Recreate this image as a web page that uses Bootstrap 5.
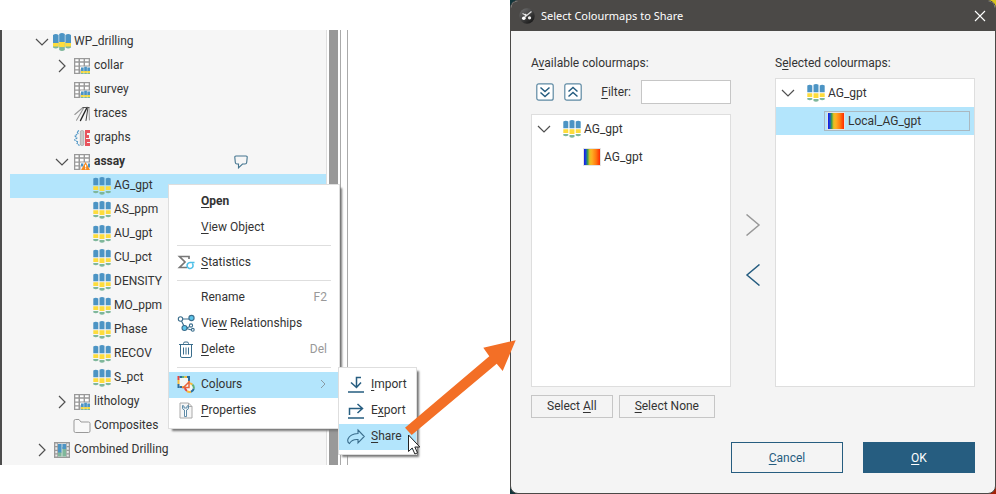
<!DOCTYPE html>
<html lang="en">
<head>
<meta charset="utf-8">
<meta name="viewport" content="width=device-width, initial-scale=1">
<title>Select Colourmaps to Share</title>
<link href="https://cdn.jsdelivr.net/npm/bootstrap@5.3.0/dist/css/bootstrap.min.css" rel="stylesheet">
<style>
  :root { --ink: #333; --navy: #265d80; --pick: #b3e5fc; --line: #dedede; }
  body { font: 12px/16px Roboto, "Liberation Sans", sans-serif; color: var(--ink); background: #fff; }
  svg { display: block; flex: none; }
  u { text-underline-offset: 2px; text-decoration-thickness: 1px; }
  button { font: inherit; color: inherit; }

  /* project tree */
  .project-pane { flex: 0 0 348px; margin-top: 30px; height: 435px; background: #f6f6f6; border-left: 2px solid #4d4d4d; border-right: 1px solid #aaa; }
  .project-tree { border-right: 1px solid var(--line); padding-left: 8px; }
  .scroll-track { width: 14px; background: #fff; border-right: 1px solid #aaa; padding: 0 2px; }
  .scroll-thumb { height: 100%; background: #999; }
  .tree-line { height: 24px; }
  .tree-line.picked, .map-line.picked { background: var(--pick); }
  .lv0 { padding-left: 22px; } .lv1 { padding-left: 42px; } .lv2 { padding-left: 62px; }
  .cell { width: 20px; height: 18px; flex: none; display: flex; justify-content: center; align-items: center; }
  .tree-text { padding-left: 2px; white-space: nowrap; }
  .tree-line .tree-text { padding-bottom: 2px; }
  .note { margin-left: 109px; }
  .edge { width: 6px; background: #fff; }

  /* context menus */
  .ctx { position: absolute; background: #fff; border: 1px solid var(--line); padding: 4px 0; box-shadow: 3px 3px 2px -1px #777; z-index: 2; }
  .ctx-main { left: 166px; top: 154px; width: 172px; }
  .ctx-sub { left: 100%; top: -5px; width: 79px; margin-left: -1px; z-index: 3; }
  .ctx-item { display: flex; align-items: center; width: 100%; height: 26px; border: 0; background: transparent; padding: 0 12px 2px 7px; text-align: left; }
  .ctx-item.hot { background: var(--pick); }
  .ctx-item .cell { margin-right: 5px; }
  .ctx-rule { height: 1px; margin: 4px 8px; background: var(--line); border: 0; opacity: 1; }
  .ctx-key { color: #999; }
  .pointer-layer { position: absolute; left: 400px; top: 336px; z-index: 5; pointer-events: none; }

  /* dialog */
  .desktop-back { margin-left: 162px; min-height: 100vh;
    background: linear-gradient(to right, transparent 50%, #d8c51c 50%) top / 100% 20px no-repeat,
                linear-gradient(to right, #12353b 50%, #a32308 50%); }
  .share-dialog { background: #f4f4f4; border: 1px solid #4b4947; border-radius: 8px; overflow: hidden; }
  .title-strip { height: 30px; gap: 6px; background: #4b4947; color: #fff; font-family: "Noto Sans", "Open Sans", sans-serif; font-size: 11px; padding: 0 8px; }
  .dialog-body { padding: 24px 20px 20px; }
  .map-label { height: 16px; margin-bottom: 7px; }
  .tool-row { height: 28px; margin-bottom: 8px; padding-left: 5px; gap: 10px; }
  .bare { border: 0; background: transparent; padding: 0; }
  .filter-box { width: 90px; height: 24px; border: 1px solid #c6c6c6; background: #fff; font: inherit; padding: 2px 4px; }
  .map-list { background: #fff; border: 1px solid var(--line); }
  .map-line { height: 28px; padding-left: 2px; }
  .map-line .cell:first-child { margin-right: 8px; }
  .map-kid { padding-left: 50px; }
  .map-kid.picked { padding: 4px 4px 4px 48px; }
  .focus-box { height: 20px; flex: 1; border: 1px solid #aab8c0; padding-left: 1px; }
  .move-col { width: 44px; flex: none; gap: 28px; padding-top: 159px; }
  .pick-row { height: 23px; margin-top: 8px; gap: 6px; }
  .pick-btn { border: 1px solid #c6c6c6; background: #f4f4f4; padding: 0 15px; height: 23px; line-height: 21px; }
  .end-row { gap: 20px; margin-top: 24px; }
  .end-btn { width: 112px; height: 31px; border: 1px solid var(--navy); background: #f4f4f4; color: var(--navy); }
  .end-btn.go { background: var(--navy); color: #fff; }
</style>
<script src="https://cdn.jsdelivr.net/npm/bootstrap@5.3.0/dist/js/bootstrap.bundle.min.js"></script>
</head>
<body>
<svg width="0" height="0" class="position-absolute" aria-hidden="true">
  <defs>
    <linearGradient id="ramp"><stop offset="0" stop-color="#1414e6"/><stop offset=".12" stop-color="#1b4fd0"/><stop offset=".22" stop-color="#3a9a50"/><stop offset=".36" stop-color="#e8c020"/><stop offset=".5" stop-color="#ffad22"/><stop offset=".75" stop-color="#ff7a10"/><stop offset="1" stop-color="#ff2a00"/></linearGradient>
    <linearGradient id="orb" x1="0" y1="0" x2=".8" y2="1"><stop offset="0" stop-color="#777"/><stop offset=".5" stop-color="#444"/><stop offset="1" stop-color="#161616"/></linearGradient>
  </defs>
  <symbol id="down" viewBox="0 0 14 14"><path d="M1 4l6 6 6-6" fill="none" stroke="#505050" stroke-width="1.200"/></symbol>
  <symbol id="next" viewBox="0 0 14 14"><path d="M4 1l6 6-6 6" fill="none" stroke="#505050" stroke-width="1.200"/></symbol>
  <symbol id="holes" viewBox="0 0 18 18">
    <path fill="#7fb79b" d="M0 10h5.600v4.500q-2.800 2-5.600 0zM6.200 10h5.600v7q-2.800 2-5.600 0zM12.400 10H18v4.500q-2.800 2-5.600 0z"/>
    <path fill="#fddc3c" d="M0 9h5.600v4.500H0zM6.200 9h5.600v5H6.200zM12.400 9H18v4.500h-5.600z"/>
    <path fill="#4c94c4" d="M0 2q2.800-1.800 5.600 0v8H0zM6.200 1q2.800-1.800 5.600 0v8H6.200zM12.400 2q2.800-1.800 5.600 0v8h-5.600z"/>
  </symbol>
  <symbol id="parts" viewBox="0 0 18 18">
    <path fill="#4c94c4" d="M.3 1.500q2.500-1.400 5 0v6.800h-5zM6.500.8q2.500-1.400 5 0v7.400h-5zM12.700 1.500q2.500-1.400 5 0v6.800h-5z"/>
    <path fill="#fddc3c" d="M.3 9.300h5v3.700h-5zM6.500 9.300h5V14h-5zM12.700 9.300h5v3.700h-5z"/>
    <path fill="#7fb79b" d="M.3 14h5v1.600q-2.500 1.400-5 0zM6.500 15h5v2q-2.500 1.600-5 0zM12.700 14h5v1.600q-2.500 1.400-5 0z"/>
  </symbol>
  <symbol id="grid" viewBox="0 0 16 16"><path d="M0 0h16v16H0z" fill="#999"/><path d="M1.300 1.300h3.200v2H1.300zM6 1.300h3.600v2H6zM11 1.300h3.700v2H11zM1.300 4.800h3.200v2.600H1.300zM6 4.800h3.600v2.600H6zM11 4.800h3.700v2.600H11zM1.300 8.800h3.200v2.400H1.300zM6 8.800h3.600v2.400H6zM1.300 12.600h3.200v2.200H1.300z" fill="#fff"/></symbol>
  <symbol id="table" viewBox="0 0 16 16"><use href="#grid" width="16" height="16"/><path d="M6.500 8.500H16V16H6.500z" fill="#f6f6f6"/><path fill="#4c94c4" d="M7 9.500h2.700v4H7zM10.200 8.800h2.700v4.700h-2.700zM13.300 9.500H16v4h-2.700z"/><path fill="#f5d83c" d="M7 13h2.700v2H7zM10.200 13h2.700v2h-2.700zM13.300 13H16v2h-2.700z"/><path fill="#7fb79b" d="M7 15h2.700v1H7zM10.200 15h2.700v1h-2.700zM13.300 15H16v1h-2.700z"/></symbol>
  <symbol id="warn" viewBox="0 0 16 16"><use href="#grid" width="16" height="16"/><path d="M6.500 8.500H16V16H6.500z" fill="#f6f6f6"/><path fill="#4c94c4" d="M7 9.500h2.300v3H7zM14 9.500h2v4h-2z"/><path fill="#f58a1f" d="M11.600 8l4.400 8H7z"/><path d="M11 10.800h1.200v2.600H11zM11 14.200h1.200v1H11z" fill="#fff"/></symbol>
  <symbol id="traces" viewBox="0 0 16 16"><g fill="none" stroke-linecap="round"><path d="M9 1.500L.8 8.500M10 1.500L2.500 14.200" stroke="#999" stroke-width="1.100"/><path d="M13 1.500L6.500 14.500" stroke="#222" stroke-width="1.400"/><path d="M14 1.500l-2 13" stroke="#444"/><path d="M15 1.500l.4 12.500" stroke="#999"/><path d="M9 1.500h6" stroke="#555"/></g></symbol>
  <symbol id="graphs" viewBox="0 0 16 16"><path d="M5 .5L3 2 4 3.500 1 6l2 2-2.500 2L4 12l-1 1.500 2.500 2" fill="none" stroke="#4c94c4" stroke-width="1.100" stroke-dasharray="2 .7"/><rect x="6.300" y=".5" width="3.600" height="15" rx="1.500" fill="#c8c8c8" stroke="#999" stroke-width=".6"/><path fill="#e8525c" d="M11 0h5v3h-3v2h2v3h-3v1h4v3h-3v1h3v3h-5z"/></symbol>
  <symbol id="folder" viewBox="0 0 18 16"><path d="M1 13V3q0-1.500 1.500-1.500H6L8 4h7.500Q17 4 17 5.500V13q0 1.500-1.500 1.500h-13Q1 14.500 1 13z" fill="#f8f8f8" stroke="#999"/></symbol>
  <symbol id="combo" viewBox="0 0 16 16"><path d="M0 0h16v16H0z" fill="#999"/><path d="M1.300 1.500h2v2.500h-2zM1.300 5.300h2v2.500h-2zM1.300 9h2v2.300h-2zM1.300 12.600h2v2h-2zM12.800 1.500h2v2.500h-2zM12.800 5.300h2v2.500h-2zM12.800 9h2v2.300h-2zM12.800 12.600h2v2h-2zM4 1.200h8.200v13.500H4z" fill="#e8e8e8"/><path fill="#7fb79b" d="M4 10h3.600v4.500H4zM8.400 5h3.700v9.500H8.400z"/><path fill="#4c94c4" d="M4 2h3.600v8.500H4zM8.400 2h3.700v5H8.400z"/></symbol>
  <symbol id="swatch" viewBox="0 0 18 18"><rect x=".5" y=".5" width="17" height="17" fill="#fff" stroke="#e3e3e3"/><rect x="1" y="1" width="16" height="16" fill="url(#ramp)"/></symbol>
</svg>

<div class="d-flex position-relative">
  <section class="project-pane d-flex position-relative" aria-label="Project tree">
    <ul class="project-tree list-unstyled mb-0 flex-grow-1">
      <li class="tree-line lv0 d-flex align-items-center"><span class="cell"><svg width="14" height="14"><use href="#down"/></svg></span><span class="cell"><svg width="18" height="18"><use href="#holes"/></svg></span><span class="tree-text">WP_drilling</span></li>
      <li class="tree-line lv1 d-flex align-items-center"><span class="cell"><svg width="14" height="14"><use href="#next"/></svg></span><span class="cell"><svg width="16" height="16"><use href="#table"/></svg></span><span class="tree-text">collar</span></li>
      <li class="tree-line lv1 d-flex align-items-center"><span class="cell"></span><span class="cell"><svg width="16" height="16"><use href="#table"/></svg></span><span class="tree-text">survey</span></li>
      <li class="tree-line lv1 d-flex align-items-center"><span class="cell"></span><span class="cell"><svg width="16" height="16"><use href="#traces"/></svg></span><span class="tree-text">traces</span></li>
      <li class="tree-line lv1 d-flex align-items-center"><span class="cell"></span><span class="cell"><svg width="16" height="16"><use href="#graphs"/></svg></span><span class="tree-text">graphs</span></li>
      <li class="tree-line lv1 d-flex align-items-center"><span class="cell"><svg width="14" height="14"><use href="#down"/></svg></span><span class="cell"><svg width="16" height="16"><use href="#warn"/></svg></span><b class="tree-text">assay</b>
        <svg class="note" width="14" height="14" viewBox="0 0 14 14"><path d="M2 1h10Q13.300 1 13.200 2.300L12.700 7.500Q12.500 9 11 9H8.500L4.500 12.800V9H3Q1.500 9 1.300 7.500L.8 2.300Q.7 1 2 1z" fill="none" stroke="#44758f" stroke-width="1.100"/></svg></li>
      <li class="tree-line lv2 picked d-flex align-items-center"><span class="cell"></span><span class="cell"><svg width="18" height="18"><use href="#parts"/></svg></span><span class="tree-text">AG_gpt</span></li>
      <li class="tree-line lv2 d-flex align-items-center"><span class="cell"></span><span class="cell"><svg width="18" height="18"><use href="#parts"/></svg></span><span class="tree-text">AS_ppm</span></li>
      <li class="tree-line lv2 d-flex align-items-center"><span class="cell"></span><span class="cell"><svg width="18" height="18"><use href="#parts"/></svg></span><span class="tree-text">AU_gpt</span></li>
      <li class="tree-line lv2 d-flex align-items-center"><span class="cell"></span><span class="cell"><svg width="18" height="18"><use href="#parts"/></svg></span><span class="tree-text">CU_pct</span></li>
      <li class="tree-line lv2 d-flex align-items-center"><span class="cell"></span><span class="cell"><svg width="18" height="18"><use href="#parts"/></svg></span><span class="tree-text">DENSITY</span></li>
      <li class="tree-line lv2 d-flex align-items-center"><span class="cell"></span><span class="cell"><svg width="18" height="18"><use href="#parts"/></svg></span><span class="tree-text">MO_ppm</span></li>
      <li class="tree-line lv2 d-flex align-items-center"><span class="cell"></span><span class="cell"><svg width="18" height="18"><use href="#parts"/></svg></span><span class="tree-text">Phase</span></li>
      <li class="tree-line lv2 d-flex align-items-center"><span class="cell"></span><span class="cell"><svg width="18" height="18"><use href="#parts"/></svg></span><span class="tree-text">RECOV</span></li>
      <li class="tree-line lv2 d-flex align-items-center"><span class="cell"></span><span class="cell"><svg width="18" height="18"><use href="#parts"/></svg></span><span class="tree-text">S_pct</span></li>
      <li class="tree-line lv1 d-flex align-items-center"><span class="cell"><svg width="14" height="14"><use href="#next"/></svg></span><span class="cell"><svg width="16" height="16"><use href="#table"/></svg></span><span class="tree-text">lithology</span></li>
      <li class="tree-line lv1 d-flex align-items-center"><span class="cell"></span><span class="cell"><svg width="18" height="16"><use href="#folder"/></svg></span><span class="tree-text">Composites</span></li>
      <li class="tree-line lv0 d-flex align-items-center"><span class="cell"><svg width="14" height="14"><use href="#next"/></svg></span><span class="cell"><svg width="16" height="16"><use href="#combo"/></svg></span><span class="tree-text">Combined Drilling</span></li>
    </ul>
    <div class="scroll-track"><div class="scroll-thumb"></div></div>
    <div class="edge"></div>

    <div class="ctx ctx-main" role="menu">
      <button class="ctx-item fw-bold" role="menuitem"><span class="cell"></span><span><u>O</u>pen</span></button>
      <button class="ctx-item" role="menuitem"><span class="cell"></span><span><u>V</u>iew Object</span></button>
      <hr class="ctx-rule">
      <button class="ctx-item" role="menuitem"><span class="cell"><svg width="18" height="18" viewBox="0 0 18 18"><path d="M12 6V3.500H2.500L8 9l-5.500 5.500H10" fill="none" stroke="#777" stroke-width="1.700"/><path d="M17.500 9.500H13a3 3 0 1 0 2.300 1" fill="none" stroke="#4fc0e8" stroke-width="1.600"/></svg></span><span><u>S</u>tatistics</span></button>
      <hr class="ctx-rule">
      <button class="ctx-item" role="menuitem"><span class="cell"></span><span>Rename</span><span class="ctx-key ms-auto">F2</span></button>
      <button class="ctx-item" role="menuitem"><span class="cell"><svg width="18" height="18" viewBox="0 0 18 18"><g stroke="#3a6d8c" stroke-width="1.100" fill="none"><path d="M5.500 5h6.500M4.500 7l2.500 5M9.500 14l3.500-1.500M9.500 14.500l5 1.500"/><circle cx="3.500" cy="5" r="2.200" fill="#fff"/><circle cx="14.500" cy="4" r="2.600" fill="#5cc4ea"/><circle cx="7.500" cy="14" r="2.500" fill="#5cc4ea"/><circle cx="14" cy="11.500" r="1.600" fill="#fff"/><circle cx="15.800" cy="15.800" r="1.400" fill="#fff"/></g></svg></span><span>Vie<u>w</u> Relationships</span></button>
      <button class="ctx-item" role="menuitem"><span class="cell"><svg width="18" height="18" viewBox="0 0 18 18"><g stroke="#3a6d8c" stroke-width="1" fill="none"><path d="M2 4.500h14M6.500 4.500v-1Q6.500 2 8 2h2q1.500 0 1.500 1.500v1M3.500 4.500V16q0 1.500 1.500 1.500h8q1.500 0 1.500-1.500V4.500M6.500 7.500v7M9 7.500v7M11.500 7.500v7"/></g></svg></span><span><u>D</u>elete</span><span class="ctx-key ms-auto">Del</span></button>
      <hr class="ctx-rule">
      <div class="position-relative">
        <button class="ctx-item hot" role="menuitem" aria-haspopup="true" aria-expanded="true"><span class="cell"><svg width="18" height="18" viewBox="0 0 18 18"><path d="M2 2h10v10H2z" fill="#f4f6f4"/><circle cx="12.500" cy="12.500" r="4" fill="#f4f6f4"/><g fill="none" stroke-width="2"><path d="M1.500 1v4" stroke="#e8453c"/><path d="M1.500 5v4" stroke="#f6b93c"/><path d="M1.500 9v4" stroke="#2c6e9e"/><path d="M2.500 2H5M10 2h3" stroke="#2c6e9e"/><path d="M5 2h2.500" stroke="#5fb37c"/><path d="M7.500 2H10" stroke="#f6b93c"/><path d="M12 3v3" stroke="#2c6e9e"/><path d="M12 6v2" stroke="#f6b93c"/><path d="M2.500 12H5" stroke="#2c6e9e"/><path d="M5 12h2.500" stroke="#f6b93c"/><path d="M8 13a4.500 4.500 0 0 0 2 3" stroke="#e8453c"/><path d="M10 16.200a4.500 4.500 0 0 0 4 .5" stroke="#f6b93c"/><path d="M14 16.700a4.500 4.500 0 0 0 2.800-3.200" stroke="#2c6e9e"/><path d="M16.800 13.500a4.500 4.500 0 0 0-1.500-4" stroke="#5fb37c"/><path d="M15.300 9.500a4.500 4.500 0 0 0-3-1.300" stroke="#f6b93c"/></g><path d="M12 7v5.500H6.500z" fill="none" stroke="#e8653c" stroke-width="1.500"/></svg></span><span>Co<u>l</u>ours</span><svg class="ms-auto" width="8" height="10" viewBox="0 0 8 10"><path d="M2 1l4 4-4 4" fill="none" stroke="#8a9ba5"/></svg></button>
        <div class="ctx ctx-sub" role="menu">
          <button class="ctx-item" role="menuitem"><span class="cell"><svg width="16" height="18" viewBox="0 0 16 18"><path d="M13 2.500H8.500v9.500M3 7.500L8.500 12.500l4.500-5M0 17h16" fill="none" stroke="#265d80" stroke-width="1.500"/></svg></span><span><u>I</u>mport</span></button>
          <button class="ctx-item" role="menuitem"><span class="cell"><svg width="16" height="18" viewBox="0 0 16 18"><path d="M1.500 14V7.500h12M9.500 3l5 4.500-5 4.500M0 17h16" fill="none" stroke="#265d80" stroke-width="1.500"/></svg></span><span>E<u>x</u>port</span></button>
          <button class="ctx-item hot" role="menuitem"><span class="cell"><svg width="18" height="18" viewBox="0 0 18 18"><path d="M11 3l6.300 6.500L11 16v-3.500Q5 12 2.500 16.500 0 15 1 12 3 7 11 6.500z" fill="none" stroke="#3a6d8c" stroke-width="1.100"/></svg></span><span><u>S</u>hare</span></button>
        </div>
      </div>
      <button class="ctx-item" role="menuitem"><span class="cell"><svg width="16" height="18" viewBox="0 0 16 18"><path d="M2 2h8.500L14 5.500V17H2z" fill="#f6f6f6" stroke="#aaa"/><path d="M10.500 2v3.500H14" fill="none" stroke="#aaa"/><path d="M4.500 4.500V7q0 1.500 2 2v6.500h2V9q2-.5 2-2V4.500L9 5v2H6V5z" fill="#fff" stroke="#4f7f9e" stroke-width=".9"/></svg></span><span><u>P</u>roperties</span></button>
    </div>
  </section>

  <svg class="pointer-layer" width="120" height="120" viewBox="0 0 120 120" aria-hidden="true">
    <path d="M115.700 4.300L102.700 35l-6-7.300L11.700 99 5 91.700l84.300-71.400-6-8.600z" fill="#f36f26"/>
    <path d="M8.500 99v16.500l3.700-3.500 2.700 6 2.600-1.200-2.700-5.800h5z" fill="#fff" stroke="#222"/>
  </svg>

  <div class="desktop-back d-flex flex-grow-1">
    <section class="share-dialog d-flex flex-column flex-grow-1" role="dialog" aria-labelledby="dlg-title">
      <header class="title-strip d-flex align-items-center">
        <svg width="16" height="16" viewBox="0 0 16 16"><circle cx="8" cy="8" r="7.700" fill="url(#orb)"/><path d="M3.500 5.500l3 1.500M7 8l5.500-4.500M4.500 10.500L7 8M10 9.500l1.500 1" stroke="#ddd" stroke-width="1.300" fill="none"/><circle cx="4.800" cy="10.300" r="1.800" fill="#fff"/><circle cx="10.500" cy="9.800" r="1.600" fill="#eee"/><circle cx="6.500" cy="6.800" r="1.100" fill="#eee"/></svg>
        <span id="dlg-title">Select Colourmaps to Share</span>
        <button class="bare ms-auto" aria-label="Close"><svg width="14" height="14" viewBox="0 0 14 14"><path d="M2 2l10 10M12 2L2 12" stroke="#fff" stroke-width="1.100"/></svg></button>
      </header>
      <div class="dialog-body d-flex flex-column flex-grow-1">
        <div class="d-flex flex-grow-1">
          <div class="d-flex flex-column flex-fill w-50">
            <div class="map-label">A<u>v</u>ailable colourmaps:</div>
            <div class="tool-row d-flex align-items-center">
              <button class="bare" aria-label="Expand all"><svg width="18" height="18" viewBox="0 0 18 18"><rect x=".8" y=".8" width="16.400" height="16.400" rx="2" fill="#fff" stroke="#5d89a3" stroke-width="1.200"/><path d="M4.500 4.500L9 8.500l4.500-4M4.500 9.500l4.500 4 4.500-4" fill="none" stroke="#265d80" stroke-width="1.500"/></svg></button>
              <button class="bare" aria-label="Collapse all"><svg width="18" height="18" viewBox="0 0 18 18"><rect x=".8" y=".8" width="16.400" height="16.400" rx="2" fill="#fff" stroke="#5d89a3" stroke-width="1.200"/><path d="M4.500 8.500L9 4.500l4.500 4M4.500 13.500l4.500-4 4.500 4" fill="none" stroke="#265d80" stroke-width="1.500"/></svg></button>
              <label class="ms-auto" for="filter"><u>F</u>ilter:</label>
              <input class="filter-box" id="filter" type="text">
            </div>
            <ul class="map-list list-unstyled mb-0 flex-grow-1">
              <li class="map-line d-flex align-items-center"><span class="cell"><svg width="14" height="14"><use href="#down"/></svg></span><span class="cell"><svg width="18" height="18"><use href="#parts"/></svg></span><span class="tree-text">AG_gpt</span></li>
              <li class="map-line map-kid d-flex align-items-center"><span class="cell m-0"><svg width="18" height="18"><use href="#swatch"/></svg></span><span class="tree-text">AG_gpt</span></li>
            </ul>
            <div class="pick-row d-flex">
              <button class="pick-btn">Select <u>A</u>ll</button>
              <button class="pick-btn"><u>S</u>elect None</button>
            </div>
          </div>
          <div class="move-col d-flex flex-column align-items-center">
            <button class="bare" aria-label="Add" disabled><svg width="16" height="22" viewBox="0 0 16 22"><path d="M1.500 .5L14 11 1.500 21.500" fill="none" stroke="#999" stroke-width="1.500"/></svg></button>
            <button class="bare" aria-label="Remove"><svg width="16" height="22" viewBox="0 0 16 22"><path d="M14.500 .5L2 11l12.500 10.500" fill="none" stroke="#265d80" stroke-width="1.500"/></svg></button>
          </div>
          <div class="d-flex flex-column flex-fill w-50">
            <div class="map-label">S<u>e</u>lected colourmaps:</div>
            <ul class="map-list list-unstyled flex-grow-1 mb-0">
              <li class="map-line d-flex align-items-center"><span class="cell"><svg width="14" height="14"><use href="#down"/></svg></span><span class="cell"><svg width="18" height="18"><use href="#parts"/></svg></span><span class="tree-text">AG_gpt</span></li>
              <li class="map-line map-kid picked d-flex align-items-center"><span class="focus-box d-flex align-items-center"><span class="cell m-0"><svg width="18" height="18"><use href="#swatch"/></svg></span><span class="tree-text">Local_AG_gpt</span></span></li>
            </ul>
            <div class="pick-row"></div>
          </div>
        </div>
        <div class="end-row d-flex justify-content-end">
          <button class="end-btn"><u>C</u>ancel</button>
          <button class="end-btn go"><u>O</u>K</button>
        </div>
      </div>
    </section>
  </div>
</div>
</body>
</html>
